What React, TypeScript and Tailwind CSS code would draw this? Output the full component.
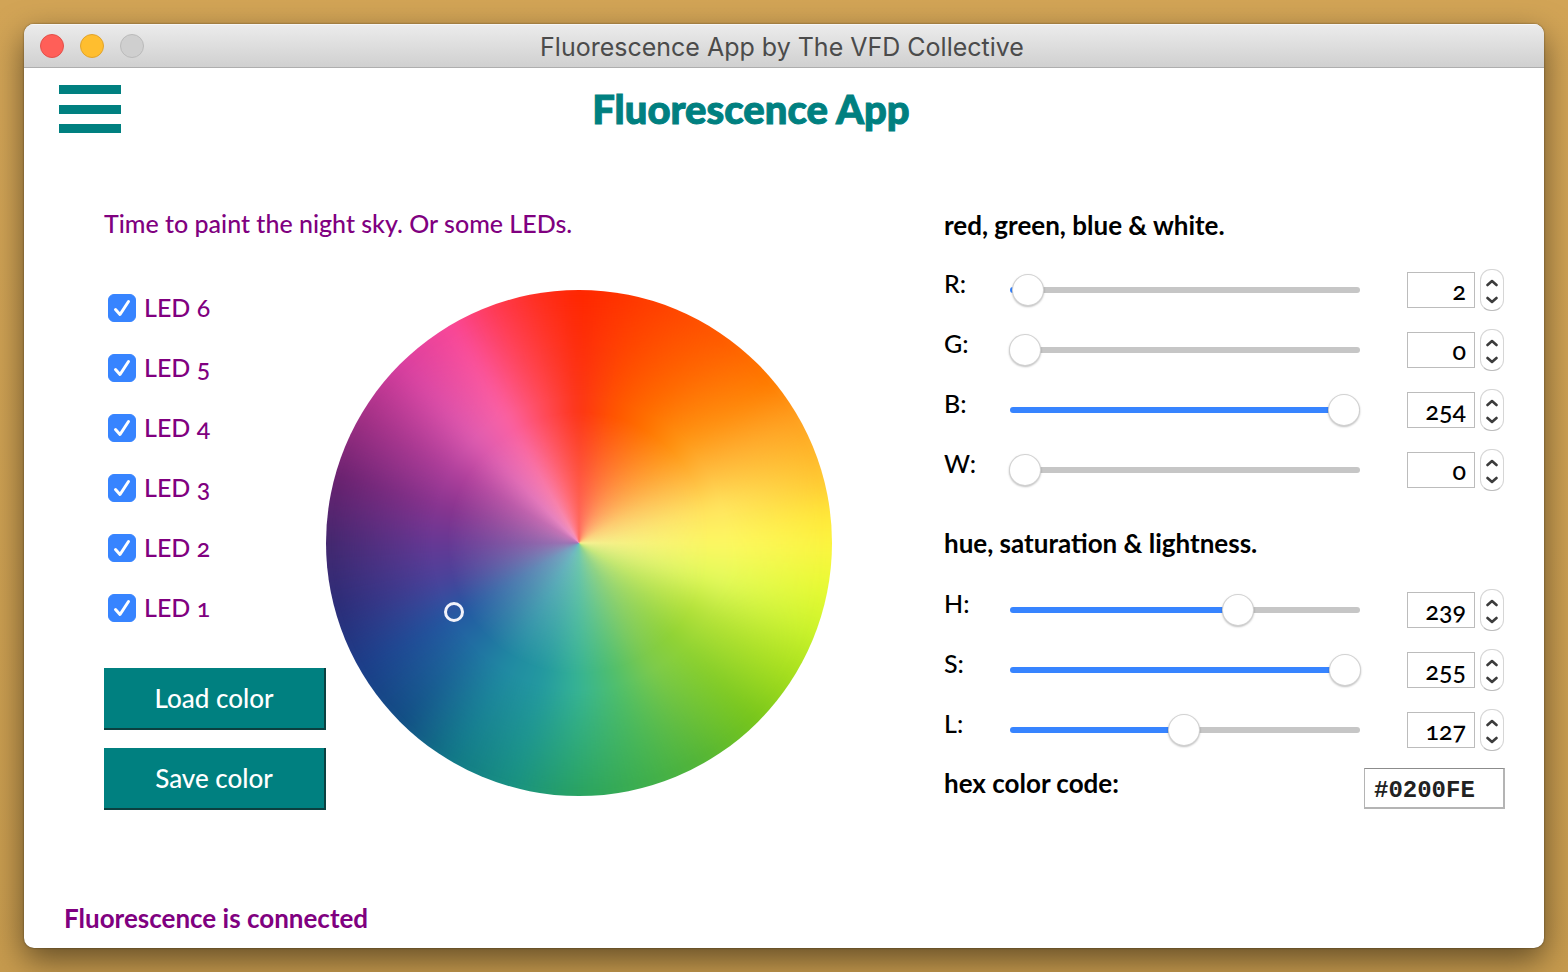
import { useState } from "react";

type Channel = { key: string; max: number; value: number };

const rgbw: Channel[] = [
  { key: "R", max: 255, value: 2 },
  { key: "G", max: 255, value: 0 },
  { key: "B", max: 255, value: 254 },
  { key: "W", max: 255, value: 0 },
];

const hsl: Channel[] = [
  { key: "H", max: 359, value: 239 },
  { key: "S", max: 255, value: 255 },
  { key: "L", max: 255, value: 127 },
];

const leds = [6, 5, 4, 3, 2, 1];

function TitleBar() {
  return (
    <div className="grid h-11 shrink-0 grid-cols-[1fr_auto_1fr] items-center border-b border-[#aeaeae] bg-linear-to-b from-[#ececec] to-[#d0d0d0] px-4 shadow-[inset_0_1px_0_#f6f6f6]">
      <div className="flex gap-4">
        <button type="button" aria-label="Close" className="size-6 rounded-full border border-[#e2504a] bg-[#ff5f58]" />
        <button type="button" aria-label="Minimize" className="size-6 rounded-full border border-[#e0a32c] bg-[#ffbe2f]" />
        <button type="button" aria-label="Zoom" className="size-6 rounded-full border border-[#bababa] bg-[#cfcfcf]" />
      </div>
      <h1 className="pt-0.5 pr-1 font-['Inter',sans-serif] text-[25px] leading-8 text-[#4b4b4b]">
        Fluorescence App by The VFD Collective
      </h1>
      <div />
    </div>
  );
}

function LedCheckbox({ led }: { led: number }) {
  return (
    <label className="flex h-15 items-center gap-2 pl-1">
      <span className="relative size-7">
        <input
          type="checkbox"
          defaultChecked
          className="peer size-7 appearance-none rounded-md border border-[#c4c4c4] bg-white checked:border-[#3784ff] checked:bg-[#3784ff]"
        />
        <svg viewBox="0 0 28 28" className="pointer-events-none absolute inset-0 hidden size-7 peer-checked:block" aria-hidden="true">
          <path d="M7.5 15.5 L12 20.5 L20.5 7.5" fill="none" stroke="white" strokeWidth="3" strokeLinecap="round" strokeLinejoin="round" />
        </svg>
      </span>
      <span className="pb-0.5">LED {led}</span>
    </label>
  );
}

function ColorWheel() {
  return (
    <div className="relative mt-9 aspect-square w-[506px] self-start overflow-hidden rounded-full" role="img" aria-label="Color wheel">
      <div className="absolute -inset-6 bg-[conic-gradient(#ff2600_0deg,#ff4400_20deg,#ff5c00_35deg,#ff7c00_50deg,#ffa020_60deg,#ffc833_75deg,#ffe93a_84deg,#fbf541_91deg,#e8fa35_100deg,#cdf42c_110deg,#a6df1e_122deg,#78c61c_135deg,#55b636_150deg,#3eaf4e_165deg,#2aa463_180deg,#199282_195deg,#127a88_210deg,#134f86_225deg,#1c3f8a_240deg,#2c2e7a_255deg,#442870_270deg,#6a2270_285deg,#a13085_300deg,#d940a0_315deg,#fa4898_330deg,#ff3a50_341deg,#ff2f1e_351deg,#ff2600_360deg)] blur-sm" />
      <div className="absolute inset-0 rounded-full bg-[conic-gradient(#fd3314_0deg,#ff5400_15deg,#ff7200_30deg,#ff9412_45deg,#ffb83c_60deg,#ffe35e_75deg,#fdf862_90deg,#e2f95a_105deg,#b4e23a_120deg,#8fd233_135deg,#7cca4c_150deg,#50bf6c_165deg,#36b494_180deg,#2399a0_195deg,#208aa2_210deg,#2070a2_225deg,#2458a2_240deg,#4a429a_255deg,#663894_270deg,#88348f_285deg,#b0409c_300deg,#de5cb0_315deg,#fb62a4_330deg,#ff4a58_345deg,#fd3314_360deg)] mask-[radial-gradient(closest-side,black_58%,transparent_98%)] blur-sm" />
      <div className="absolute inset-0 rounded-full bg-[conic-gradient(#ff6a60_0deg,#ffa070_30deg,#fcd080_60deg,#f5f090_90deg,#c8e880_120deg,#94d490_150deg,#70c8b0_180deg,#6fb8c0_210deg,#7aa0c0_240deg,#9c74b4_270deg,#c878b8_300deg,#e88cc4_315deg,#f890b4_330deg,#ff7c88_345deg,#ff6a60_360deg)] mask-[radial-gradient(closest-side,black_5%,transparent_52%)]" />
      <div className="absolute top-[61.6%] left-[23.3%] size-5 rounded-full border-3 border-[#f2f2fa]" />
    </div>
  );
}

function Stepper({ name, onStep }: { name: string; onStep: (delta: number) => void }) {
  return (
    <div className="ml-[5px] flex h-[42px] w-6 flex-col rounded-[11px] border border-[#d6d6d6] border-b-[#bdbdbd] bg-white">
      <button type="button" aria-label={`Increase ${name}`} onClick={() => onStep(1)} className="flex flex-1 items-center justify-center pt-1">
        <svg viewBox="0 0 12 8" className="h-2 w-3" aria-hidden="true">
          <path d="M1.5 6 L6 2 L10.5 6" fill="none" stroke="#3c3c3c" strokeWidth="2.6" strokeLinecap="round" strokeLinejoin="round" />
        </svg>
      </button>
      <button type="button" aria-label={`Decrease ${name}`} onClick={() => onStep(-1)} className="flex flex-1 items-center justify-center pb-0.5">
        <svg viewBox="0 0 12 8" className="h-2 w-3" aria-hidden="true">
          <path d="M1.5 2 L6 6 L10.5 2" fill="none" stroke="#3c3c3c" strokeWidth="2.6" strokeLinecap="round" strokeLinejoin="round" />
        </svg>
      </button>
    </div>
  );
}

function ChannelRow({ channel }: { channel: Channel }) {
  const [value, setValue] = useState(channel.value);
  const update = (next: number) => setValue(Math.max(0, Math.min(channel.max, next || 0)));
  const id = `channel-${channel.key}`;
  // The fill ends under the centre of the 30px thumb.
  const ratio = value / channel.max;
  const fill = `calc(15px + (100% - 30px) * ${ratio})`;

  return (
    <div className="flex h-15 items-center pr-px">
      <label htmlFor={id} className="w-[66px] pb-3.5">
        {channel.key}:
      </label>
      <input
        id={id}
        type="range"
        min={0}
        max={channel.max}
        value={value}
        onChange={(e) => update(Number(e.target.value))}
        style={{ backgroundSize: `${fill} 100%` }}
        className="h-1.5 min-w-0 flex-1 appearance-none rounded-full bg-[#c6c6c6] bg-linear-to-r from-[#3784ff] to-[#3784ff] bg-no-repeat [&::-webkit-slider-thumb]:size-[30px] [&::-webkit-slider-thumb]:appearance-none [&::-webkit-slider-thumb]:rounded-full [&::-webkit-slider-thumb]:bg-white [&::-webkit-slider-thumb]:shadow-[0_0_0_1px_#d2d2d2,0_1px_2px_1px_#00000040]"
      />
      <input
        type="text"
        inputMode="numeric"
        aria-label={`${channel.key} value`}
        value={value}
        onChange={(e) => update(Number(e.target.value))}
        className="ml-[47px] h-9 w-[68px] border border-[#bcbcbc] bg-white pr-2 text-right"
      />
      <Stepper name={channel.key} onStep={(delta) => update(value + delta)} />
    </div>
  );
}

function ActionButton({ children }: { children: string }) {
  return (
    <button type="button" className="h-[62px] border-r-2 border-b-2 border-[#0b4040] bg-[#008080] text-[26px] text-white">
      {children}
    </button>
  );
}

export default function App() {
  return (
    <div className="flex min-h-screen bg-linear-to-b from-[#d2a456] to-[#c79b4e] p-6 font-['Lato_Medium','Lato',sans-serif] text-[25px] leading-8 text-black oldstyle-nums">
      <div className="flex flex-1 flex-col overflow-hidden rounded-[10px] bg-white shadow-[0_0_2px_#00000080,0_12px_32px_#00000080]">
        <TitleBar />

        <header className="flex h-21 items-center pr-[163px] pb-0.5 pl-[35px]">
          <button type="button" aria-label="Menu" className="flex h-12 flex-col justify-between">
            <span className="h-[9px] w-[62px] bg-[#008080]" />
            <span className="h-[9px] w-[62px] bg-[#008080]" />
            <span className="h-[9px] w-[62px] bg-[#008080]" />
          </button>
          <h2 className="flex-1 text-center font-['Lato',sans-serif] text-[40px] leading-12 font-black text-[#008080] [-webkit-text-stroke:1px_#008080]">
            Fluorescence App
          </h2>
        </header>

        <main className="mt-[42px] flex justify-between gap-10 pr-[39px] pl-20">
          <section className="text-[#800080]">
            <p className="flex h-15 items-center pb-0.5">Time to paint the night sky. Or some LEDs.</p>
            <div className="flex">
              <div className="flex w-[222px] flex-col pt-6">
                {leds.map((led) => (
                  <LedCheckbox key={led} led={led} />
                ))}
                <div className="mt-[30px] flex flex-col gap-[18px]">
                  <ActionButton>Load color</ActionButton>
                  <ActionButton>Save color</ActionButton>
                </div>
              </div>
              <ColorWheel />
            </div>
          </section>

          <section className="w-[561px]">
            <h3 className="flex h-[66px] items-center pb-1 font-['Lato',sans-serif] text-[26px] font-bold">red, green, blue &amp; white.</h3>
            {rgbw.map((channel) => (
              <ChannelRow key={channel.key} channel={channel} />
            ))}
            <h3 className="flex h-20 items-center pt-1.5 font-['Lato',sans-serif] text-[26px] font-bold">hue, saturation &amp; lightness.</h3>
            {hsl.map((channel) => (
              <ChannelRow key={channel.key} channel={channel} />
            ))}
            <div className="flex justify-between pt-2">
              <label htmlFor="hex" className="font-['Lato',sans-serif] text-[26px] leading-[30px] font-bold">
                hex color code:
              </label>
              <input
                id="hex"
                type="text"
                defaultValue="#0200FE"
                className="h-[41px] w-[141px] border border-r-2 border-b-2 border-[#b4b4b4] border-t-[#8c8c8c] pt-1 pl-[9px] font-['Liberation_Mono',monospace] text-2xl font-bold text-[#222]"
              />
            </div>
          </section>
        </main>

        <footer className="mt-auto px-10 pb-3.5 font-['Lato',sans-serif] text-[26px] font-bold text-[#800080]">Fluorescence is connected</footer>
      </div>
    </div>
  );
}
